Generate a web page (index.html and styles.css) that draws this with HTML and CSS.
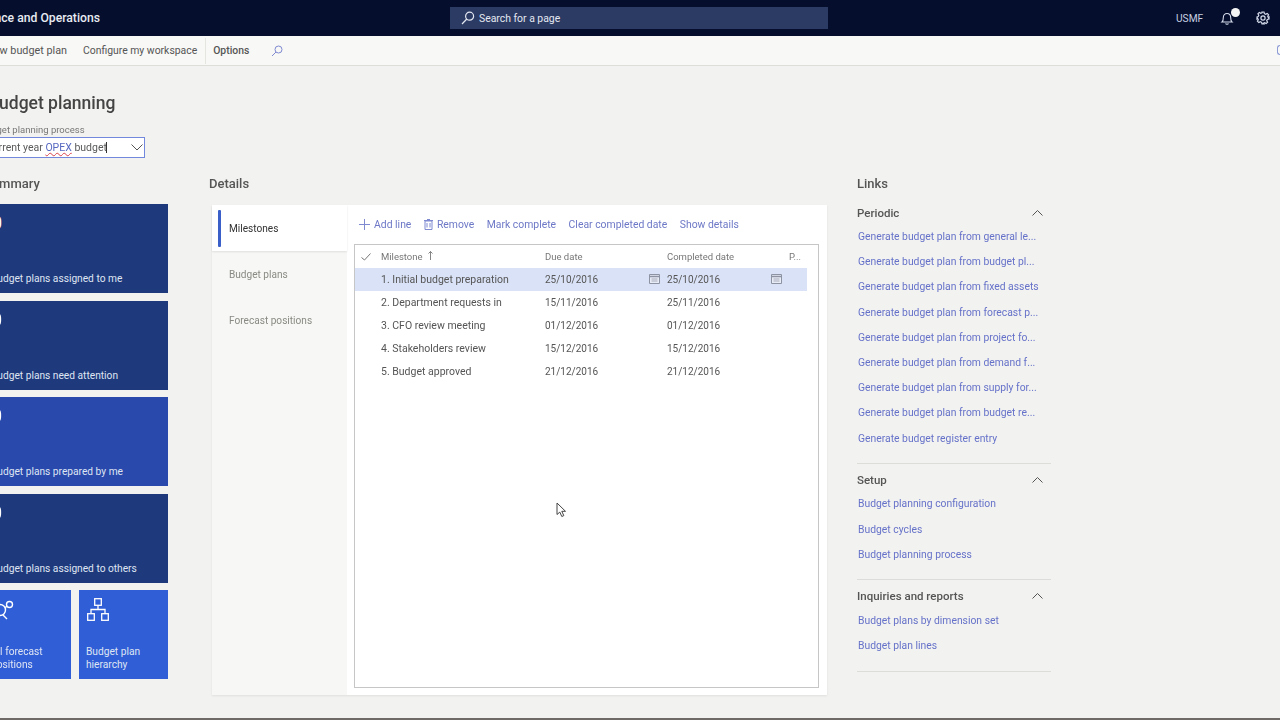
FILE: index.html
```html
<!DOCTYPE html>
<html lang="en">
<head>
<meta charset="utf-8">
<title>Budget planning</title>
<link rel="stylesheet" href="styles.css">
</head>
<body>
<header class="topbar">
  <div class="brand"><span>Finance and Operations</span></div>
  <div class="searchbox">
    <svg class="search-icon" width="14" height="14" viewBox="0 0 14 14" fill="none" stroke="#e4e8f2" stroke-width="1.2"><circle cx="8.6" cy="5.2" r="4"/><path d="M5.800 8 1 13"/></svg>
    <span>Search for a page</span>
  </div>
  <div class="top-right">
    <span class="company">USMF</span>
    <span class="bell">
      <svg width="14" height="16" viewBox="0 0 14 16" fill="none" stroke="#d6dcec" stroke-width="1.1"><path d="M2 12c1.200-1 1.300-2.200 1.300-4.200C3.300 5 5 3.500 7 3.500s3.700 1.500 3.700 4.300c0 2 .1 3.200 1.300 4.200z"/><path d="M5.500 13.500c.6 1 2.400 1 3 0"/></svg>
      <span class="badge"></span>
    </span>
    <svg class="gear" width="14" height="14" viewBox="0 0 14 14" fill="none" stroke="#d6dcec" stroke-width="1.2"><circle cx="7" cy="7" r="2.100"/><path d="M6 1h2l.4 1.700 1.300.6 1.500-.9 1.400 1.400-.9 1.500.6 1.300L13 6v2l-1.700.4-.6 1.300.9 1.500-1.400 1.400-1.500-.9-1.300.6L8 13H6l-.4-1.700-1.300-.6-1.500.9-1.400-1.400.9-1.500-.6-1.300L1 8V6l1.200-.4.6-1.300-.9-1.500 1.400-1.400 1.500.9 1.300-.6z"/></svg>
  </div>
</header>

<nav class="commandbar">
  <div class="cmd-clip"><span>New budget plan</span></div>
  <span class="cmd-item">Configure my workspace</span>
  <span class="cmd-sep"></span>
  <span class="cmd-strong">Options</span>
  <svg class="cmd-search" width="12" height="12" viewBox="0 0 12 12" fill="none" stroke="#7f8ad0" stroke-width="1"><circle cx="7.500" cy="4.500" r="3.500"/><path d="M5 7 1 11"/></svg>
  <span class="cmd-end"></span>
</nav>

<main class="page">
  <section class="head">
    <h1 class="title">Budget planning</h1>
    <div class="field-label">Budget planning process</div>
    <div class="combo">
      <span class="combo-text">Current year <span class="misspelt">OPEX</span> budget<span class="caret"></span></span>
      <svg width="12" height="7" viewBox="0 0 12 7" fill="none" stroke="#555" stroke-width="1"><path d="M.5.500 6 6l5.500-5.500"/></svg>
    </div>
  </section>

  <section class="columns">
    <div class="col-summary">
      <h2 class="col-title summary-title">Summary</h2>
      <div class="tiles">
        <div class="tile tile-dark"><span class="tile-num">0</span><span class="tile-label">Budget plans assigned to me</span></div>
        <div class="tile tile-dark"><span class="tile-num">0</span><span class="tile-label">Budget plans need attention</span></div>
        <div class="tile tile-mid"><span class="tile-num">0</span><span class="tile-label">Budget plans prepared by me</span></div>
        <div class="tile tile-dark"><span class="tile-num">0</span><span class="tile-label">Budget plans assigned to others</span></div>
        <div class="tile-row">
          <div class="tile tile-small">
            <svg class="small-icon clip-icon" width="24" height="24" viewBox="0 0 24 24" fill="none" stroke="#fff" stroke-width="1.400"><circle cx="10" cy="13" r="5.500"/><circle cx="19.500" cy="7.500" r="3"/><path d="M15 10.500l2-1.200M13 18l4 4"/></svg>
            <span class="tile-label">All forecast positions</span>
          </div>
          <div class="tile tile-small">
            <svg class="small-icon" width="24" height="24" viewBox="0 0 24 24" fill="none" stroke="#fff" stroke-width="1.300"><rect x="8.700" y="1.700" width="6.600" height="6.600"/><rect x="1.700" y="16.700" width="6.600" height="6.600"/><rect x="15.700" y="16.700" width="6.600" height="6.600"/><path d="M12 8.300V12.500M5 16.700V12.500H19V16.700"/></svg>
            <span class="tile-label">Budget plan hierarchy</span>
          </div>
        </div>
      </div>
    </div>

    <div class="col-details">
      <h2 class="col-title">Details</h2>
      <div class="panel">
        <div class="tabs">
          <div class="tab tab-active">Milestones</div>
          <div class="tab">Budget plans</div>
          <div class="tab">Forecast positions</div>
        </div>
        <div class="panel-body">
          <div class="actions">
            <span class="action"><svg width="11" height="11" viewBox="0 0 11 11" stroke="#7f8ad0" stroke-width="1"><path d="M5.500 0v11M0 5.500h11"/></svg>Add line</span>
            <span class="action"><svg width="9" height="11" viewBox="0 0 9 11" fill="none" stroke="#7f8ad0" stroke-width="1"><path d="M1 2h7v8.500H1zM0 1.500h9M3 .500h3M3 4v4.500M6 4v4.500"/></svg>Remove</span>
            <span class="action">Mark complete</span>
            <span class="action">Clear completed date</span>
            <span class="action">Show details</span>
          </div>
          <div class="grid">
            <div class="row row-head">
              <span class="cell-check"><svg width="10" height="8" viewBox="0 0 10 8" fill="none" stroke="#777" stroke-width="1"><path d="M.5 4.500 3.500 7 9.500.5"/></svg></span>
              <span class="cell-name">Milestone<svg class="sort" width="5" height="9" viewBox="0 0 5 9" fill="none" stroke="#777" stroke-width=".9"><path d="M2.500 9V.5M.5 2.500 2.500.5l2 2"/></svg></span>
              <span class="cell-date">Due date</span>
              <span class="cell-date">Completed date</span>
              <span class="cell-p">P...</span>
            </div>
            <div class="row row-selected">
              <span class="cell-check"></span>
              <span class="cell-name">1. Initial budget preparation</span>
              <span class="cell-date date-val">25/10/2016<svg class="cal" width="11" height="10" viewBox="0 0 11 10" fill="#e8ecf6" stroke="#8d93a3" stroke-width="1"><path d="M.5.500h10v9H.5z"/><path d="M.5 2.500h10" stroke-width="1.500"/><path d="M2.500 5h6M2.500 7h6" stroke-width=".7"/></svg></span>
              <span class="cell-date date-val">25/10/2016<svg class="cal" width="11" height="10" viewBox="0 0 11 10" fill="#e8ecf6" stroke="#8d93a3" stroke-width="1"><path d="M.5.500h10v9H.5z"/><path d="M.5 2.500h10" stroke-width="1.500"/><path d="M2.500 5h6M2.500 7h6" stroke-width=".7"/></svg></span>
              <span class="cell-p"></span>
            </div>
            <div class="row"><span class="cell-check"></span><span class="cell-name">2. Department requests in</span><span class="cell-date date-val">15/11/2016</span><span class="cell-date date-val">25/11/2016</span><span class="cell-p"></span></div>
            <div class="row"><span class="cell-check"></span><span class="cell-name">3. CFO review meeting</span><span class="cell-date date-val">01/12/2016</span><span class="cell-date date-val">01/12/2016</span><span class="cell-p"></span></div>
            <div class="row"><span class="cell-check"></span><span class="cell-name">4. Stakeholders review</span><span class="cell-date date-val">15/12/2016</span><span class="cell-date date-val">15/12/2016</span><span class="cell-p"></span></div>
            <div class="row"><span class="cell-check"></span><span class="cell-name">5. Budget approved</span><span class="cell-date date-val">21/12/2016</span><span class="cell-date date-val">21/12/2016</span><span class="cell-p"></span></div>
          </div>
        </div>
      </div>
    </div>

    <aside class="col-links">
      <h2 class="col-title">Links</h2>
      <div class="group">
        <div class="group-head"><span>Periodic</span><svg class="chev" width="11" height="6" viewBox="0 0 11 6" fill="none" stroke="#555" stroke-width="1"><path d="M.5 5.500 5.500.5l5 5"/></svg></div>
        <a class="link">Generate budget plan from general le...</a>
        <a class="link">Generate budget plan from budget pl...</a>
        <a class="link">Generate budget plan from fixed assets</a>
        <a class="link">Generate budget plan from forecast p...</a>
        <a class="link">Generate budget plan from project fo...</a>
        <a class="link">Generate budget plan from demand f...</a>
        <a class="link">Generate budget plan from supply for...</a>
        <a class="link">Generate budget plan from budget re...</a>
        <a class="link">Generate budget register entry</a>
      </div>
      <div class="group">
        <div class="group-head"><span>Setup</span><svg class="chev" width="11" height="6" viewBox="0 0 11 6" fill="none" stroke="#555" stroke-width="1"><path d="M.5 5.500 5.500.5l5 5"/></svg></div>
        <a class="link">Budget planning configuration</a>
        <a class="link">Budget cycles</a>
        <a class="link">Budget planning process</a>
      </div>
      <div class="group">
        <div class="group-head"><span>Inquiries and reports</span><svg class="chev" width="11" height="6" viewBox="0 0 11 6" fill="none" stroke="#555" stroke-width="1"><path d="M.5 5.500 5.500.5l5 5"/></svg></div>
        <a class="link">Budget plans by dimension set</a>
        <a class="link">Budget plan lines</a>
      </div>
    </aside>
  </section>
</main>

<svg class="cursor" width="11" height="16" viewBox="0 0 11 16" fill="#fff" stroke="#444" stroke-width="1"><path d="M1 1v11.500l2.800-2.400 2 4.400 2-.9-2-4.300h3.700z"/></svg>
<div class="bottom-line"></div>
</body>
</html>
```
FILE: styles.css
```css
* { box-sizing: border-box; }
html, body { margin: 0; height: 720px; overflow: hidden; }
body {
  position: relative;
  width: 1280px;
  background: #f2f2f0;
  color: #4a4a4a;
  font-family: Roboto, "Noto Sans", "Liberation Sans", sans-serif;
  font-size: 10.400px;
  filter: blur(.3px);
}

.topbar {
  height: 36px;
  background: #050f2d;
  color: #fff;
  display: flex;
  align-items: center;
}
.brand {
  width: 100px;
  margin-right: 350px;
  display: flex;
  justify-content: flex-end;
  overflow: hidden;
  white-space: nowrap;
  font-size: 12.200px;
  font-weight: 500;
  color: #e8ebf3;
}
.searchbox {
  width: 378px;
  height: 22px;
  background: #2c3b63;
  display: flex;
  align-items: center;
  padding-left: 11px;
  gap: 4px;
  color: #e4e8f2;
  font-size: 10.400px;
}
.top-right {
  margin-left: auto;
  width: 104px;
  display: flex;
  align-items: center;
  color: #c8d0e2;
  font-size: 10.200px;
}
.company { margin-right: 17px; }
.bell { position: relative; display: flex; margin-right: 22px; }
.badge {
  position: absolute;
  top: -2px;
  right: -6px;
  width: 9px;
  height: 9px;
  border-radius: 50%;
  background: #f4f4f4;
}

.commandbar {
  height: 30px;
  background: #f8f8f6;
  border-bottom: 1px solid #deded9;
  display: flex;
  align-items: center;
  color: #555;
  white-space: nowrap;
}
.cmd-clip {
  width: 67px;
  display: flex;
  justify-content: flex-end;
  overflow: hidden;
  font-size: 10.800px;
}
.cmd-item { margin-left: 16px; }
.cmd-sep { width: 1px; height: 26px; background: #e4e4e0; margin: 0 7px 0 8px; }
.cmd-strong { font-weight: 500; }
.cmd-search { margin-left: 22px; }
.cmd-end {
  margin-left: auto;
  width: 3px;
  height: 10px;
  border: 1px solid #8d9bd6;
  border-right: 0;
  border-radius: 3px 0 0 3px;
  margin-bottom: 2px;
}

.page {
  margin-left: -16px;
  padding-top: 26px;
}
.head { position: relative; }
.title {
  margin: 0 0 0 4px;
  font-size: 17.500px;
  line-height: 22px;
  font-weight: 500;
  color: #444;
  white-space: nowrap;
}
.field-label {
  margin-top: 9px;
  margin-left: -4px;
  font-size: 9.500px;
  line-height: 13px;
  color: #777;
  white-space: nowrap;
}
.combo {
  margin-top: 1px;
  margin-left: -4px;
  width: 165px;
  height: 21px;
  background: #fff;
  border: 1.500px solid #7188dc;
  display: flex;
  align-items: center;
  justify-content: space-between;
  padding: 0 0 0 5px;
  color: #5a5a5a;
  font-size: 10.500px;
  white-space: nowrap;
}
.combo svg { margin-right: 1px; }
.misspelt { text-decoration: underline wavy #d8434b 1px; color: #5668c0; }
.caret { display: inline-block; width: 1px; height: 11px; background: #333; vertical-align: -2px; margin-left: -1px; }

.columns {
  display: flex;
  margin-top: 16px;
}
.col-title {
  margin: 0;
  font-size: 13px;
  line-height: 20px;
  font-weight: 500;
  color: #555;
  white-space: nowrap;
}
.col-summary { width: 225px; }
.summary-title { margin-left: -9px; padding-left: 9px; }
.tiles {
  margin-top: 10px;
  width: 184px;
  display: grid;
  grid-auto-rows: 89px;
  gap: 7.500px;
}
.tile {
  padding: 0 7px 8px;
  color: #dfe5f3;
  position: relative;
  display: flex;
  flex-direction: column;
  justify-content: flex-end;
  font-size: 10.200px;
  line-height: 13px;
}
.tile-dark { background: #1f3a7c; }
.tile-mid { background: #2949ac; }
.tile-small { background: #305ed6; }
.tile-num {
  position: absolute;
  top: 9px;
  left: 8px;
  font-size: 18px;
  line-height: 20px;
  color: #fff;
}
.tile-row { display: grid; grid-template-columns: 87px 89px; gap: 8px; }
.small-icon { position: absolute; top: 7px; left: 7px; }
.clip-icon { left: 6px; }

.col-details { width: 648px; }
.panel {
  margin-top: 11px;
  width: 615px;
  height: 490px;
  background: #fff;
  display: flex;
  box-shadow: 0 1px 2px rgba(0,0,0,.08);
  margin-left: 3px;
}
.tabs {
  width: 135px;
  background: #f7f7f5;
  display: flex;
  flex-direction: column;
}
.tab {
  height: 46px;
  padding-left: 17px;
  display: flex;
  align-items: center;
  color: #8a8a84;
  font-size: 10.100px;
}
.tab-active {
  background: #fff;
  color: #333;
  position: relative;
  box-shadow: 0 1px 2px rgba(0,0,0,.1);
}
.tab-active::before {
  content: "";
  position: absolute;
  left: 6px;
  top: 5px;
  width: 3px;
  height: 37px;
  background: #3a5fc8;
  border-radius: 1px;
}
.panel-body { flex: 1; padding: 0 8px 7px 7px; display: flex; flex-direction: column; }
.actions {
  height: 39px;
  display: flex;
  align-items: center;
  padding-left: 5px;
  gap: 12.500px;
  color: #6d78c6;
}
.action { display: flex; align-items: center; gap: 4px; }
.grid {
  flex: 1;
  border: 1px solid #c6c6c6;
  padding-right: 11px;
  color: #555;
}
.row {
  height: 23px;
  display: grid;
  grid-template-columns: 26px 164px 122px 122px 1fr;
  align-items: center;
  font-size: 10.500px;
}
.row-head { color: #777; font-size: 9.500px; }
.row-selected { background: #d9e2f6; }
.cell-check { padding-left: 6px; display: flex; }
.cell-date { position: relative; }
.date-val { font-size: 10px; }
.cal { position: absolute; right: 7px; top: 0; }
.sort { margin-left: 5px; }

.col-links { width: 194px; }
.group {
  display: flex;
  flex-direction: column;
  border-bottom: 1px solid #dcdcd8;
  padding-bottom: 12.300px;
}
.col-links > .col-title + .group { margin-top: 9px; }
.group-head {
  height: 19px;
  display: flex;
  align-items: center;
  justify-content: space-between;
  font-size: 11.500px;
  font-weight: 500;
  color: #555;
  margin-bottom: 2px;
}
.group + .group { padding-top: 6.500px; }
.chev { margin-right: 8px; }
.link {
  height: 25.200px;
  line-height: 25.200px;
  margin-left: 1px;
  color: #6672c9;
  white-space: nowrap;
  font-size: 10.350px;
}

.cursor { position: absolute; left: 556px; top: 502px; }
.bottom-line {
  position: absolute;
  left: 0;
  right: 0;
  bottom: 0;
  height: 2px;
  background: #6f6a66;
}
```
